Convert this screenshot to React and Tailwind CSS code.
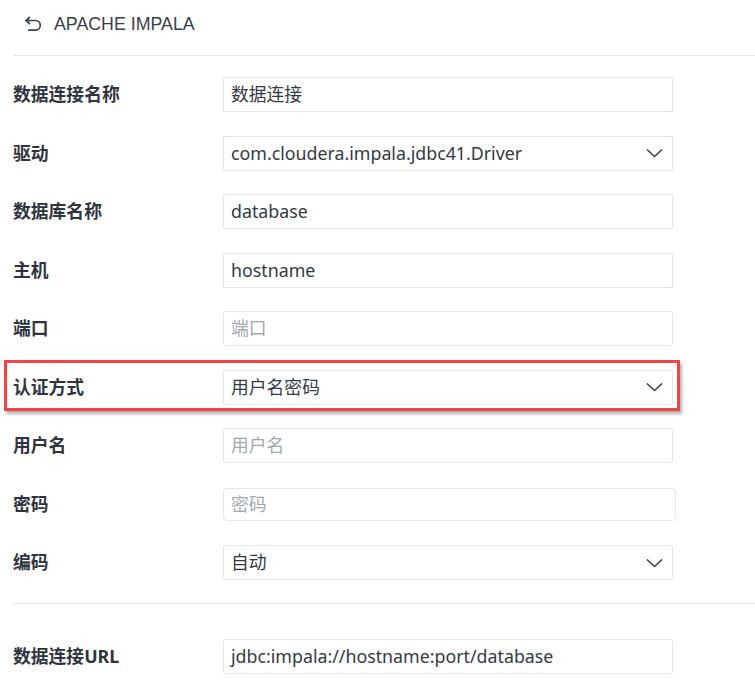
import React from 'react';

const FONT = '"Noto Sans", "Noto Sans CJK SC", sans-serif';

const Chevron = () => (
  <svg width="17" height="10" viewBox="0 0 17 10" fill="none" className="shrink-0">
    <path d="M1 1.5 8.5 8.5 16 1.5" stroke="#3c4250" strokeWidth="1.6" />
  </svg>
);

const BackIcon = () => (
  <svg width="19" height="16" viewBox="0 0 19 16" fill="none">
    <path d="M6 1 2 4.5 6 8" stroke="#3c4250" strokeWidth="1.7" strokeLinejoin="miter" />
    <path d="M2.5 4.5h9a4.8 4.8 0 0 1 0 9.6H4" stroke="#3c4250" strokeWidth="1.7" />
  </svg>
);

const Field = ({ label, value, placeholder, select, wide }) => (
  <div className="flex items-center h-[35px]">
    <div className="w-[210px] shrink-0 text-[17.8px] font-bold text-[#2f3440]">{label}</div>
    <div
      className={
        'flex items-center justify-between border border-[#e4e6ea] bg-white pl-[7px] pr-[9px] ' +
        (wide ? 'w-[453px] h-[33px] rounded-[4px]' : 'w-[450px] h-[35px] rounded-[2px]')
      }
    >
      <span className={'text-[17.8px] ' + (value ? 'text-[#333a45]' : 'text-[#a4a8b0]')}>
        {value || placeholder}
      </span>
      {select && <Chevron />}
    </div>
  </div>
);

export default function App() {
  return (
    <div className="relative w-[755px] h-[684px] bg-white overflow-hidden" style={{ fontFamily: FONT }}>
      {/* header */}
      <div className="flex items-center gap-[11px] h-[47px] pl-[24px] pt-[1px]">
        <BackIcon />
        <span className="text-[17.8px] text-[#3a3f4a] font-['Liberation_Sans',sans-serif]">APACHE IMPALA</span>
      </div>
      <div className="ml-[13px] border-t border-[#e6e6e6] mt-[8px]" />

      <div className="pl-[13px] pt-[21px] flex flex-col gap-[23.5px]">
        <Field label="数据连接名称" value="数据连接" />
        <Field label="驱动" value="com.cloudera.impala.jdbc41.Driver" select />
        <Field label="数据库名称" value="database" />
        <Field label="主机" value="hostname" />
        <Field label="端口" placeholder="端口" />
        <Field label="认证方式" value="用户名密码" select />
        <Field label="用户名" placeholder="用户名" />
        <Field label="密码" placeholder="密码" wide />
        <Field label="编码" value="自动" select />
      </div>

      <div className="ml-[13px] border-t border-[#e6e6e6] mt-[23px]" />

      <div className="pl-[13px] pt-[35px]">
        <Field label="数据连接URL" value="jdbc:impala://hostname:port/database" />
      </div>

      {/* annotation highlight */}
      <div className="absolute left-[4px] top-[360px] w-[676px] h-[51px] border-[3px] border-[#f24545] shadow-[2px_3px_3px_rgba(0,0,0,0.3)] pointer-events-none" />
    </div>
  );
}
